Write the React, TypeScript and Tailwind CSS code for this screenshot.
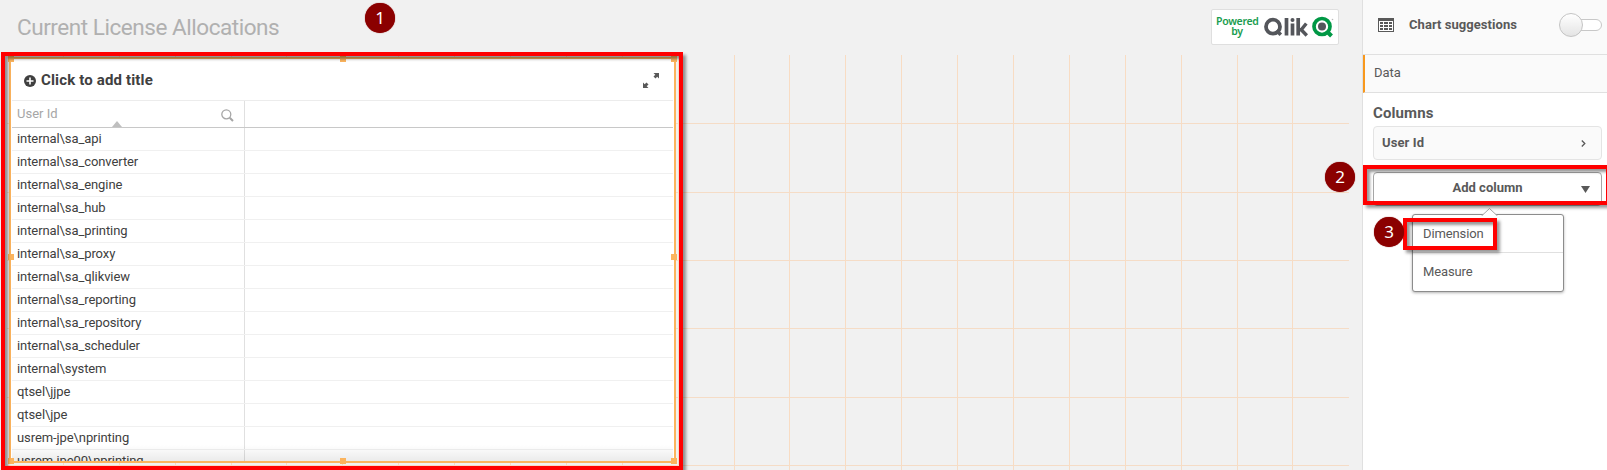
import React from "react";

const rows = [
  "internal\\sa_api", "internal\\sa_converter", "internal\\sa_engine", "internal\\sa_hub",
  "internal\\sa_printing", "internal\\sa_proxy", "internal\\sa_qlikview", "internal\\sa_reporting",
  "internal\\sa_repository", "internal\\sa_scheduler", "internal\\system", "qtsel\\jjpe",
  "qtsel\\jpe", "usrem-jpe\\nprinting", "usrem-jpe00\\nprinting",
];

const columnLines = Array.from({ length: 24 }, (_, i) => i);
const rowLines = Array.from({ length: 6 }, (_, i) => i);

function Marker({ n, className }: { n: number; className: string }) {
  return (
    <div className={`absolute z-30 flex size-[30px] items-center justify-center rounded-full bg-[#8b0000] pb-0.5 font-['Noto_Sans'] text-[17px] leading-none text-white shadow-[0_0_1px_#8b0000] ${className}`}>
      {n}
    </div>
  );
}

function Frame({ className }: { className: string }) {
  return (
    <div className={`pointer-events-none absolute z-20 border-4 border-[#ff0000] shadow-[3px_3px_3px_rgba(0,0,0,0.4),inset_3px_3px_3px_rgba(0,0,0,0.4)] ${className}`} />
  );
}

function Handle({ className }: { className: string }) {
  return <i className={`absolute size-1.5 bg-[#fbb45e] ${className}`} />;
}

function QlikBadge() {
  return (
    <div className="mt-[9px] mr-[23px] flex h-9 w-[128px] items-center rounded-[2px] border border-[#dfdfdf] bg-white pl-1">
      <div className="w-[42px] pb-[2px] text-center font-['Noto_Sans'] text-[10.5px] leading-[10px] font-semibold tracking-[-0.3px] text-[#1a9d50]">
        Powered by
      </div>
      <svg className="ml-[6px]" width="72" height="24" viewBox="0 0 72 24" fill="none">
        <circle cx="9" cy="11.700" r="7" stroke="#54565b" strokeWidth="3.800" />
        <path d="M12.500 15.500l4.300 4.300" stroke="#54565b" strokeWidth="3.600" />
        <path d="M22.500 3v17.500M28.500 8.500v12M34.200 3v17.500" stroke="#54565b" strokeWidth="3.700" />
        <path d="M35 14.800h2.200L42.300 8.500M37 14.500l5.800 6" stroke="#54565b" strokeWidth="3.400" />
        <circle cx="28.500" cy="4.900" r="2" fill="#54565b" />
        <circle cx="58" cy="11.500" r="8" stroke="#009845" strokeWidth="3.700" />
        <path d="M62.500 16l5 5" stroke="#009845" strokeWidth="4" />
        <circle cx="58" cy="11.500" r="4" fill="#54565b" />
        <circle cx="68.500" cy="4.500" r=".8" fill="#bbb" />
      </svg>
    </div>
  );
}

function TableCard() {
  return (
    <section className="relative mt-[2px] ml-[2px] flex h-[406px] w-[667px] flex-col border-2 border-[#fbb45e] bg-white px-px">
      <div className="flex h-[42px] shrink-0 items-center border-b border-[#ececec] pt-0.5 pr-[13px] pl-3">
        <svg width="12" height="12" viewBox="0 0 12 12">
          <circle cx="6" cy="6" r="6" fill="#404040" />
          <path d="M6 2.5v7M2.5 6h7" stroke="#fff" strokeWidth="1.6" />
        </svg>
        <h2 className="ml-[5px] text-[15px] font-bold tracking-[0.15px] text-[#404040]">Click to add title</h2>
        <svg className="ml-auto" width="18" height="17" viewBox="0 0 18 17">
          <path d="M11.5 1H17v5.5l-1.8-1.8-1.7 1.8-2-2 1.8-1.7zM1 10.5l1.7 1.8 1.8-1.8 2 2-1.8 1.7 1.8 1.8H1z" fill="#595959" />
        </svg>
      </div>
      <div className="grid h-[27px] shrink-0 grid-cols-[233px_1fr] border-b border-[#c8c8c8]">
        <div className="relative flex items-center border-r border-[#e0e0e0] pr-[10px] pl-[5px] text-[13px] text-[#a6a6a6]">
          User Id
          <svg className="mt-0.5 ml-auto" width="13" height="13" viewBox="0 0 13 13" fill="none" stroke="#a6a6a6">
            <circle cx="5.3" cy="5.3" r="4.5" strokeWidth="1.3" />
            <path d="M8.7 8.7l3.3 3.3" strokeWidth="2" />
          </svg>
          <svg className="absolute bottom-0 left-[100px]" width="10" height="6" viewBox="0 0 10 6"><path d="M5 0l5 6H0z" fill="#bfbfbf" /></svg>
        </div>
      </div>
      <div className="relative min-h-0 flex-1 overflow-hidden">
        {rows.map((r) => (
          <div key={r} className="grid h-[23px] grid-cols-[233px_1fr] border-b border-[#f0f0f0]">
            <div className="border-r border-[#e0e0e0] pl-[5px] text-[13px] leading-[21px] tracking-[-0.09px] text-[#404040]">{r}</div>
          </div>
        ))}
        <div className="absolute inset-x-0 bottom-0 h-4 bg-linear-to-b from-transparent to-black/8" />
      </div>
      <Handle className="-top-[3px] -left-[3px]" />
      <Handle className="-top-[3px] left-[329px]" />
      <Handle className="-top-[3px] -right-[3px]" />
      <Handle className="top-[195px] -left-[3px]" />
      <Handle className="top-[195px] -right-[3px]" />
      <Handle className="-bottom-[3px] -left-[3px]" />
      <Handle className="-bottom-[3px] left-[329px]" />
      <Handle className="-right-[3px] -bottom-[3px]" />
    </section>
  );
}

export default function App() {
  return (
    <div className="relative flex h-[470px] w-[1607px] overflow-hidden bg-[#f1f1f1] font-['Roboto','Noto_Sans',sans-serif] text-[#595959]">
      <main className="flex w-[1362px] shrink-0 flex-col">
        <header className="flex h-[55px] shrink-0 justify-between pl-[17px]">
          <h1 className="pt-[11px] text-[22.5px] leading-8 tracking-[-0.45px] text-[#b0b0b0]">Current License Allocations</h1>
          <QlikBadge />
        </header>
        <div className="grid h-[415px] overflow-hidden pl-[7px]">
          <div className="col-start-1 row-start-1 ml-px grid h-[415px] w-[1342px] grid-cols-[repeat(24,55.9px)]">
            {columnLines.map((i) => <i key={i} className={i < 23 ? "border-r border-[#f8dcc3]" : ""} />)}
          </div>
          <div className="col-start-1 row-start-1 mt-px grid h-[411px] w-[1342px] grid-rows-[repeat(6,68.35px)]">
            {rowLines.map((i) => <i key={i} className="border-b border-[#f5dcc6]" />)}
          </div>
          <div className="col-start-1 row-start-1"><TableCard /></div>
        </div>
      </main>

      <aside className="flex w-[245px] flex-col border-l border-[#e0e0e0] bg-white">
        <div className="flex h-[55px] shrink-0 items-center border-b border-[#e0e0e0] bg-[#fafafa] pr-[5px] pb-1 pl-[15px]">
          <svg width="16" height="14" viewBox="0 0 16 14">
            <path d="M0 0h16v14H0z" fill="#595959" />
            <path d="M1 3h14v10H1z" fill="#fff" />
            <path d="M2 4h3v2H2zm4 0h4v2H6zm5 0h3v2h-3zM2 7h3v2H2zm4 0h4v2H6zm5 0h3v2h-3zM2 10h3v2H2zm4 0h4v2H6zm5 0h3v2h-3z" fill="#595959" />
          </svg>
          <span className="ml-[15px] text-[13px] font-bold tracking-[0.05px]">Chart suggestions</span>
          <div className="ml-auto flex items-center">
            <div className="z-10 size-6 rounded-full border border-[#c4c4c4] bg-linear-to-b from-white to-[#e4e4e4]" />
            <div className="-ml-2 h-3 w-[27px] rounded-full border border-[#c8c8c8] bg-white" />
          </div>
        </div>
        <div className="flex h-[38px] shrink-0 items-center border-b border-l-2 border-[#e0e0e0] border-l-[#f8981d] bg-[#fafafa] pb-0.5 pl-[9px] text-[13px]">Data</div>
        <div className="flex flex-col pr-[5px] pl-[10px]">
          <h3 className="mt-[11px] text-[15px] leading-[18px] font-bold tracking-[0.1px]">Columns</h3>
          <div className="mt-1 flex h-[34px] items-center rounded-sm border border-[#e4e4e4] bg-[#fafafa] px-2 text-[13px] font-bold tracking-[0.1px]">
            User Id
            <svg className="mr-[7px] ml-auto" width="5" height="7" viewBox="0 0 5 7" fill="none" stroke="#595959" strokeWidth="1.3"><path d="M.8.500l3 3-3 3" /></svg>
          </div>
          <div className="relative mt-3 flex h-[34px] items-center justify-center rounded-sm border border-[#a6a6a6] bg-white pb-0.5 text-[13px] font-bold">
            Add column
            <svg className="absolute top-[13px] right-[11px]" width="9" height="7" viewBox="0 0 9 7"><path d="M0 0h9L4.500 7z" fill="#595959" /></svg>
          </div>
        </div>
      </aside>

      <div className="absolute top-[214px] left-[1412px] w-[152px] rounded-[3px] border border-[#8c8c8c] bg-white text-[13px] tracking-[-0.12px] shadow-[0_1px_3px_rgba(0,0,0,0.3)]">
        <svg className="absolute -top-[7px] left-[68px]" width="17" height="8" viewBox="0 0 17 8"><path d="M.5 8L8.500.500l8 7.500" fill="#fff" stroke="#a6a6a6" /></svg>
        <div className="flex h-[38px] items-center border-b border-[#e0e0e0] pl-[10px]">Dimension</div>
        <div className="flex h-[38px] items-center pl-[10px]">Measure</div>
      </div>

      <Frame className="top-[52px] left-[1px] h-[418px] w-[682px]" />
      <Frame className="top-[165px] left-[1363px] h-10 w-[247px]" />
      <Frame className="top-[218px] left-[1403px] h-8 w-[94px]" />
      <Marker n={1} className="top-[3px] left-[365px]" />
      <Marker n={2} className="top-[162px] left-[1325px]" />
      <Marker n={3} className="top-[217px] left-[1374px]" />
    </div>
  );
}
